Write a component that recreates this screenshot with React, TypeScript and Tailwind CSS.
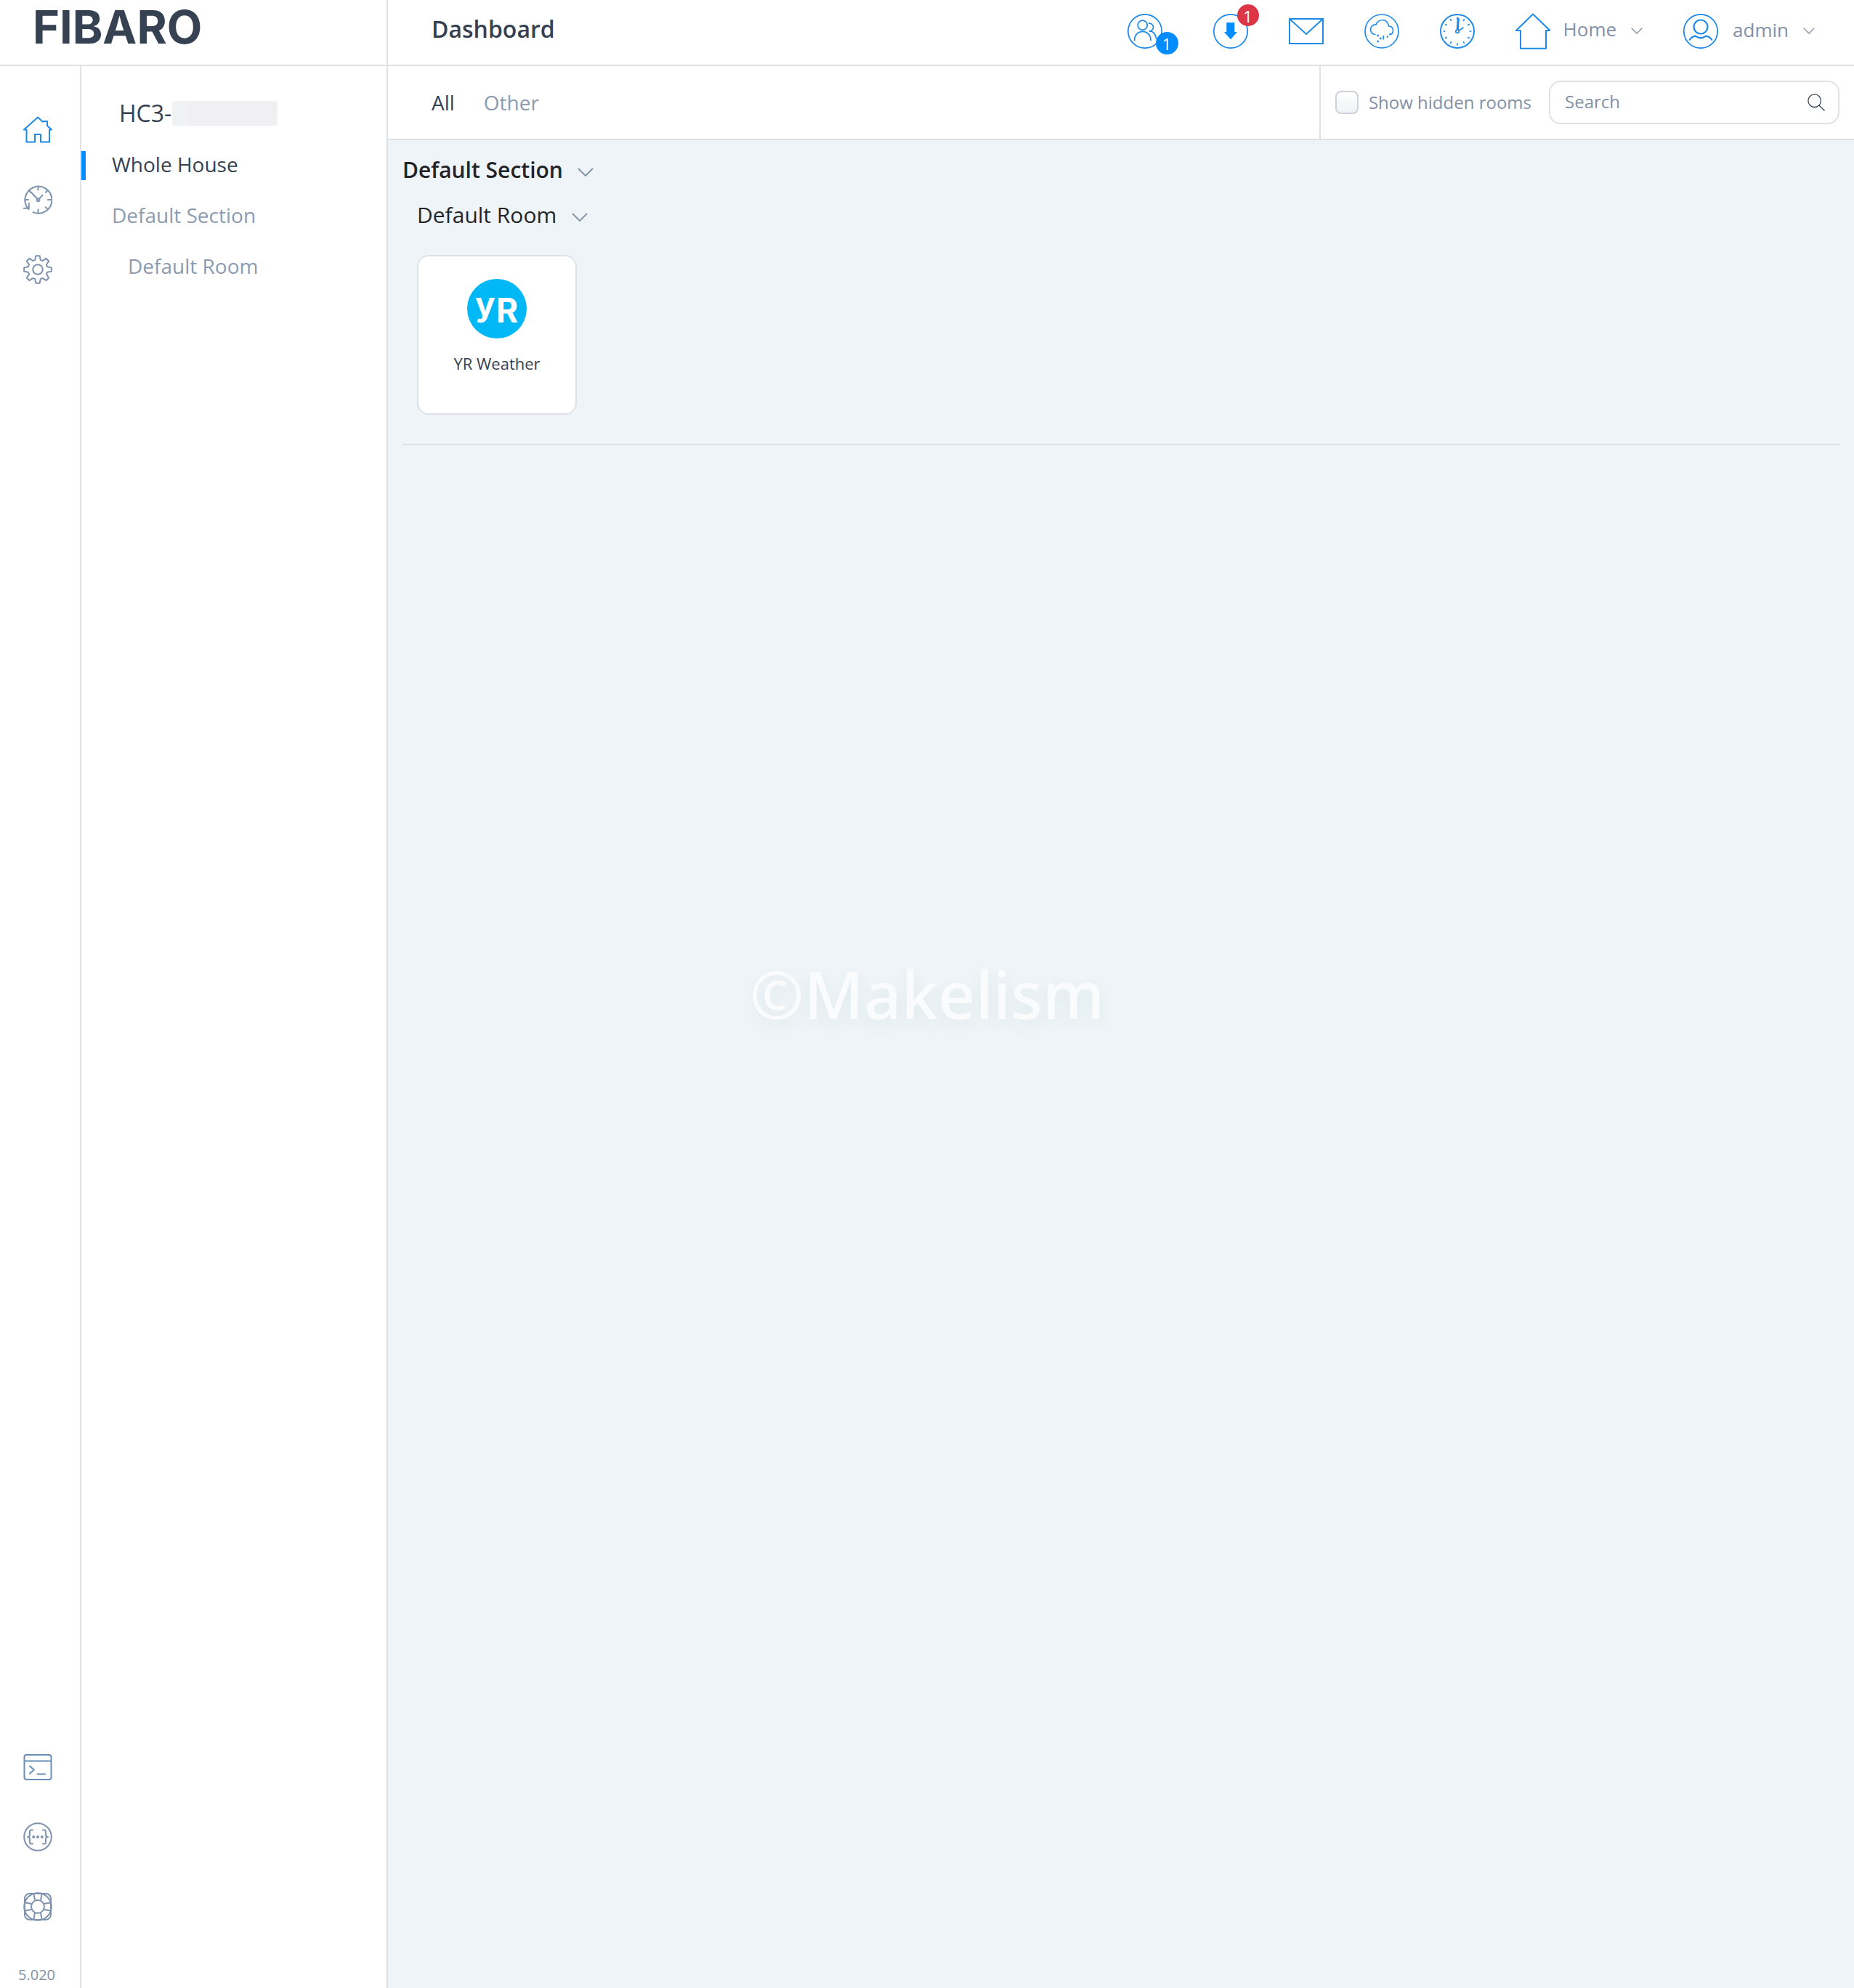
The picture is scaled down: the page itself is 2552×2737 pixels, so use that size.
import React from "react";

type IconProps = { className?: string };

/* ---------- helpers for radial drawings ---------- */

const polar = (cx: number, cy: number, r: number, deg: number) => {
  const a = (deg * Math.PI) / 180;
  return `${(cx + r * Math.cos(a)).toFixed(2)} ${(cy + r * Math.sin(a)).toFixed(2)}`;
};

const gearPath =
  Array.from({ length: 8 }, (_, i) => {
    const a = i * 45 - 90;
    return [
      polar(20, 20, 13.6, a - 16),
      polar(20, 20, 19, a - 8),
      polar(20, 20, 19, a + 8),
      polar(20, 20, 13.6, a + 16),
    ]
      .map((p, j) => `${i === 0 && j === 0 ? "M" : "L"}${p}`)
      .join(" ");
  }).join(" ") + " Z";

const ticks = (cx: number, cy: number, r1: number, r2: number, angles: number[]) =>
  angles.map((a) => `M${polar(cx, cy, r1, a)} L${polar(cx, cy, r2, a)}`).join(" ");

const clockTicks = ticks(24, 24, 16.5, 19.5, Array.from({ length: 12 }, (_, i) => i * 30));
const historyTicks =
  ticks(20.5, 20, 13.5, 18, [-90, 0, 90, 180]) + ticks(20.5, 20, 14.5, 18, [-45, 45, 225]);

/* ---------- rail icons ---------- */

const RailSvg = ({ children, className = "" }: { children: React.ReactNode; className?: string }) => (
  <svg
    viewBox="0 0 40 40"
    fill="none"
    stroke="currentColor"
    strokeWidth="2"
    strokeLinecap="round"
    strokeLinejoin="round"
    className={`size-10 ${className}`}
    aria-hidden="true"
  >
    {children}
  </svg>
);

const HouseIcon = () => (
  <RailSvg>
    <path d="M20 2.500 1 19.500H4.500V36.500H16V26H24V36.500H36V19.500H39L33 14V8H28L27 8.800Z" />
  </RailSvg>
);

const HistoryIcon = () => (
  <RailSvg>
    <path d="M13.500 37.200A18.500 18.500 0 1 0 7.500 33" />
    <path d="M.8 31.800H7.800V24.800" />
    <path d={historyTicks} />
    <path d="M9.500 8.500 19.500 18.800M22 18.600 26.500 13.800" />
    <circle cx="20.500" cy="20.200" r="1.900" />
  </RailSvg>
);

const GearIcon = () => (
  <RailSvg>
    <path d={gearPath} />
    <circle cx="20" cy="20" r="6.800" />
  </RailSvg>
);

const ConsoleIcon = () => (
  <RailSvg className="text-[#6a8db8]">
    <rect x="1.500" y="3" width="37" height="34" rx="3" />
    <path d="M2 11.500H38" />
    <path d="M9 18.500 14.800 23.500 9 28.800M19.500 29.500H30" />
  </RailSvg>
);

const ApiIcon = () => (
  <RailSvg>
    <circle cx="20" cy="20" r="18.800" />
    <path d="M13 10.500H11Q9 10.500 9 13V17Q9 20 6 20Q9 20 9 23V27Q9 29.500 11 29.500H13" />
    <path d="M27 10.500H29Q31 10.500 31 13V17Q31 20 34 20Q31 20 31 23V27Q31 29.500 29 29.500H27" />
    <g fill="currentColor" stroke="none">
      <circle cx="14.200" cy="20" r="2" />
      <circle cx="20" cy="20" r="2" />
      <circle cx="25.800" cy="20" r="2" />
    </g>
  </RailSvg>
);

const LifebuoyIcon = () => (
  <RailSvg>
    <rect x="2" y="2" width="36" height="36" rx="7" />
    <circle cx="20" cy="20" r="18.800" />
    <circle cx="20" cy="20" r="9" />
    <path d="M14.500 2.500 16 11.500M25.500 2.500 24 11.500M14.500 37.500 16 28.500M25.500 37.500 24 28.500M2.500 14.500 11.500 16M2.500 25.500 11.500 24M37.500 14.500 28.500 16M37.500 25.500 28.500 24" />
  </RailSvg>
);

/* ---------- header icons ---------- */

const BarSvg = ({ children, box = "0 0 48 48", className = "size-12" }: { children: React.ReactNode; box?: string; className?: string }) => (
  <svg viewBox={box} fill="none" stroke="#1f8ae8" strokeWidth="1.700" className={`${className} shrink-0`} aria-hidden="true">
    {children}
  </svg>
);

const UsersIcon = () => (
  <BarSvg>
    <circle cx="24" cy="24" r="23.200" />
    <circle cx="20.700" cy="15.700" r="6.500" />
    <path d="M9.700 37V35.500A11.100 11.100 0 0 1 31.900 35.500V37M28.800 13.300A5.400 5.400 0 1 1 29.500 23.900Q38 23.500 39.700 34.500" />
  </BarSvg>
);

const DownloadIcon = () => (
  <BarSvg>
    <circle cx="24" cy="24" r="23.200" />
    <path d="M18.300 12H29.300V25H33L24 35.300 15 25H18.300Z" fill="#018cff" stroke="none" />
  </BarSvg>
);

const MailIcon = () => (
  <BarSvg box="0 0 48 36" className="h-9 w-12">
    <path d="M1 1H47V35H1ZM1 1 24 22 47 1" strokeWidth="2" />
  </BarSvg>
);

const CloudIcon = () => (
  <BarSvg>
    <circle cx="24" cy="24" r="23" />
    <path d="M15.500 28.500C11 28.500 8.500 25 8.500 21.500 8.500 17.500 11.500 14.500 16 14.800 18 10.500 21 8.500 24.700 8.500 29 8.500 32.500 11.500 33.600 17 37.500 17.200 39.500 19.500 39.500 22.700 39.500 26 37.500 28.400 34 28.500" />
    <path d="M26.300 30V35.500M31.700 30V33" />
    <g fill="#1f8ae8" stroke="none">
      <circle cx="18.700" cy="30" r="1.400" />
      <circle cx="22.300" cy="34" r="1.400" />
      <circle cx="18.700" cy="38" r="1.400" />
    </g>
  </BarSvg>
);

const ClockIcon = () => (
  <BarSvg>
    <circle cx="24" cy="24" r="23" strokeWidth="2" />
    <path d={clockTicks} />
    <circle cx="24" cy="24.300" r="2.200" />
    <path d="M23.600 22 24.500 6.500H26L25 22M26 23 32.500 19" />
  </BarSvg>
);

const HomeOutlineIcon = () => (
  <BarSvg box="0 0 48 50" className="h-[50px] w-12">
    <path d="M24 1.500 1 24H7V48.700H42V24H47.500Z" strokeWidth="2" strokeLinejoin="round" />
  </BarSvg>
);

const UserIcon = () => (
  <BarSvg>
    <circle cx="24" cy="24" r="23.200" />
    <circle cx="24" cy="18" r="9.500" strokeWidth="2.200" />
    <path d="M8.300 36.500C10.500 33 13 31 16.700 30.700 19 32.300 21.500 33.300 24 33.300S29 32.300 31.300 30.700C35 31 37.500 33 39.700 36.500" strokeWidth="2.200" />
  </BarSvg>
);

const Chevron = ({ className = "" }: IconProps) => (
  <svg viewBox="0 0 22 12" fill="none" stroke="currentColor" strokeWidth="1.800" className={`shrink-0 ${className}`} aria-hidden="true">
    <path d="M1 1 11 11 21 1" />
  </svg>
);

const SearchIcon = () => (
  <svg viewBox="0 0 24 24" fill="none" stroke="#3a4556" strokeWidth="1.300" className="size-6 shrink-0" aria-hidden="true">
    <circle cx="9.700" cy="9.700" r="8.800" />
    <path d="M15.800 15.800 23.500 23.500" />
  </svg>
);

/* ---------- page ---------- */

const sidebarItems = [
  { label: "Whole House", active: true, nested: false },
  { label: "Default Section", active: false, nested: false },
  { label: "Default Room", active: false, nested: true },
];

const RailButton = ({ label, active = false, children }: { label: string; active?: boolean; children: React.ReactNode }) => (
  <a href="#" aria-label={label} className={active ? "text-[#1f8ae8]" : "text-[#7f93ae]"}>
    {children}
  </a>
);

function Header() {
  return (
    <header className="flex h-[91px] shrink-0 border-b-2 border-[#e0e1e3]">
      <div className="w-[534px] shrink-0 border-r-2 border-[#e0e1e6] pl-[45px]">
        <a href="#" className="block pt-[5px] font-['Inter',sans-serif] text-[63px] leading-16 font-bold text-[#364152]">
          FIBARO
        </a>
      </div>
      <div className="flex flex-1 items-center justify-between pr-[54px] pb-1 pl-[60px]">
        <h1 className="pb-1.5 text-[32px] leading-10 font-semibold text-[#364152]">Dashboard</h1>
        <div className="flex items-center gap-14">
          <button aria-label="Users" className="relative mr-3.5">
            <UsersIcon />
            <span className="absolute top-[25px] left-[39px] flex size-[31px] items-center justify-center rounded-full bg-[#018cff] pt-0.5 text-[22px] leading-6 text-white">
              1
            </span>
          </button>
          <button aria-label="Updates" className="relative">
            <DownloadIcon />
            <span className="absolute -top-[13px] left-[33px] flex size-[30px] items-center justify-center rounded-full bg-[#dc3545] pt-0.5 text-[22px] leading-6 text-white">
              1
            </span>
          </button>
          <button aria-label="Messages">
            <MailIcon />
          </button>
          <button aria-label="Weather">
            <CloudIcon />
          </button>
          <button aria-label="Clock">
            <ClockIcon />
          </button>
          <button className="flex items-center text-[26px] leading-8 text-[#8291a7]">
            <HomeOutlineIcon />
            <span className="ml-[18px] pb-1.5">Home</span>
            <Chevron className="ml-5 w-4" />
          </button>
          <button className="flex items-center text-[26px] leading-8 text-[#8291a7]">
            <UserIcon />
            <span className="ml-5 pb-1">admin</span>
            <Chevron className="ml-5 w-4" />
          </button>
        </div>
      </div>
    </header>
  );
}

function Rail() {
  return (
    <nav aria-label="Main" className="flex w-28 shrink-0 flex-col justify-between border-r-2 border-[#e0e1e8] pt-17 pb-1">
      <div className="flex flex-col gap-14 pl-8">
        <RailButton label="Dashboard" active>
          <HouseIcon />
        </RailButton>
        <RailButton label="History">
          <HistoryIcon />
        </RailButton>
        <RailButton label="Settings">
          <GearIcon />
        </RailButton>
      </div>
      <div className="flex flex-col gap-14 pl-8">
        <RailButton label="Console">
          <ConsoleIcon />
        </RailButton>
        <RailButton label="API">
          <ApiIcon />
        </RailButton>
        <RailButton label="Support">
          <LifebuoyIcon />
        </RailButton>
        <p className="-ml-[7px] pt-1 text-[20px] leading-7 text-[#8291a7]">5.020</p>
      </div>
    </nav>
  );
}

function Sidebar() {
  return (
    <aside className="w-[422px] shrink-0 border-r-2 border-[#e0e1e6]">
      <div className="flex h-[102px] items-center pt-7 pl-13 text-[32px] leading-10 text-[#364152]">
        HC3-
        <span className="ml-px flex h-[34px] w-[145px] overflow-hidden rounded-sm bg-[#f0f0f2]">
          <span className="w-[22px] bg-[#f1f2f4]" />
        </span>
      </div>
      <ul>
        {sidebarItems.map((item) => (
          <li key={item.label} className="flex h-[70px] items-center">
            {item.active && <span className="h-10 w-1.5 bg-[#018cff]" />}
            <a
              href="#"
              className={`pb-1 text-[28px] leading-9 ${item.active ? "pl-9 text-[#364152]" : "text-[#8c9bb0]"} ${
                item.nested ? "pl-16" : item.active ? "" : "pl-[42px]"
              }`}
            >
              {item.label}
            </a>
          </li>
        ))}
      </ul>
    </aside>
  );
}

function Toolbar() {
  return (
    <div className="flex h-[102px] items-stretch justify-between border-b-2 border-[#e0e1e3] bg-white">
      <div className="flex items-center gap-10 pl-[60px] text-[28px] leading-9">
        <button className="text-[#364152]">All</button>
        <button className="text-[#8c9bb0]">Other</button>
      </div>
      <div className="flex items-center border-l-2 border-[#e0e1e6] pr-5 pl-5">
        <label className="flex items-center gap-3.5 text-[24px] leading-8 text-[#8291a7]">
          <input
            type="checkbox"
            className="size-8 appearance-none rounded-lg border-2 border-[#cfd0dc] bg-linear-to-b from-white to-[#eff1f5]"
          />
          Show hidden rooms
        </label>
        <label className="ml-6 flex h-15 w-[400px] items-center rounded-2xl border-2 border-[#dfe1e7] pr-[18px] pl-5">
          <input
            type="text"
            aria-label="Search"
            placeholder="Search"
            className="min-w-0 flex-1 bg-transparent pb-0.5 text-[24px] leading-8 text-[#364152] outline-none placeholder:text-[#8291a7]"
          />
          <SearchIcon />
        </label>
      </div>
    </div>
  );
}

const YrLogo = () => (
  <svg viewBox="0 0 82 82" className="size-[82px]" aria-hidden="true">
    <circle cx="41" cy="41" r="41" fill="#00b8f5" />
    <text x="11" y="51" fill="#fff" fontFamily="Inter, sans-serif" fontWeight="700" fontSize="46">
      y
    </text>
    <text x="40" y="60" fill="#fff" fontFamily="Inter, sans-serif" fontWeight="700" fontSize="46">
      R
    </text>
  </svg>
);

export default function App() {
  return (
    <div className="relative flex min-h-screen flex-col bg-white font-['Open_Sans','Noto_Sans',sans-serif]">
      <Header />
      <div className="flex flex-1">
        <Rail />
        <Sidebar />
        <div className="flex min-w-0 flex-1 flex-col">
          <Toolbar />
          <main className="flex-1 bg-[#eef4f7] px-5 pt-5">
            <section>
              <h2 className="text-[30px] leading-10 font-semibold text-[#212529]">
                <button className="flex h-10 items-center gap-5">
                  <span className="pt-0.5">Default Section</span>
                  <Chevron className="mt-2 w-[22px] text-[#8291a7]" />
                </button>
              </h2>
              <div className="pl-5">
                <h3 className="mt-5 text-[30px] leading-10 text-[#212529]">
                  <button className="flex h-11 items-center gap-[21px]">
                    <span className="pt-0.5">Default Room</span>
                    <Chevron className="mt-2 w-[22px] text-[#8291a7]" />
                  </button>
                </h3>
                <button className="mt-[34px] flex size-[220px] flex-col items-center rounded-2xl border-2 border-[#dfe1e6] bg-white pt-[31px]">
                  <YrLogo />
                  <span className="mt-[18px] text-[22px] leading-8 text-[#364152]">YR Weather</span>
                </button>
              </div>
              <hr className="mt-10 border-t-2 border-[#dadfe2]" />
            </section>
          </main>
        </div>
      </div>
      <div className="pointer-events-none absolute inset-0 flex items-center justify-center pb-0.5">
        <span className="font-['Noto_Sans',sans-serif] text-[90px] leading-none font-medium text-[#fafbfd] [text-shadow:0_8px_20px_rgba(90,120,130,0.080)]">
          ©Makelism
        </span>
      </div>
    </div>
  );
}
